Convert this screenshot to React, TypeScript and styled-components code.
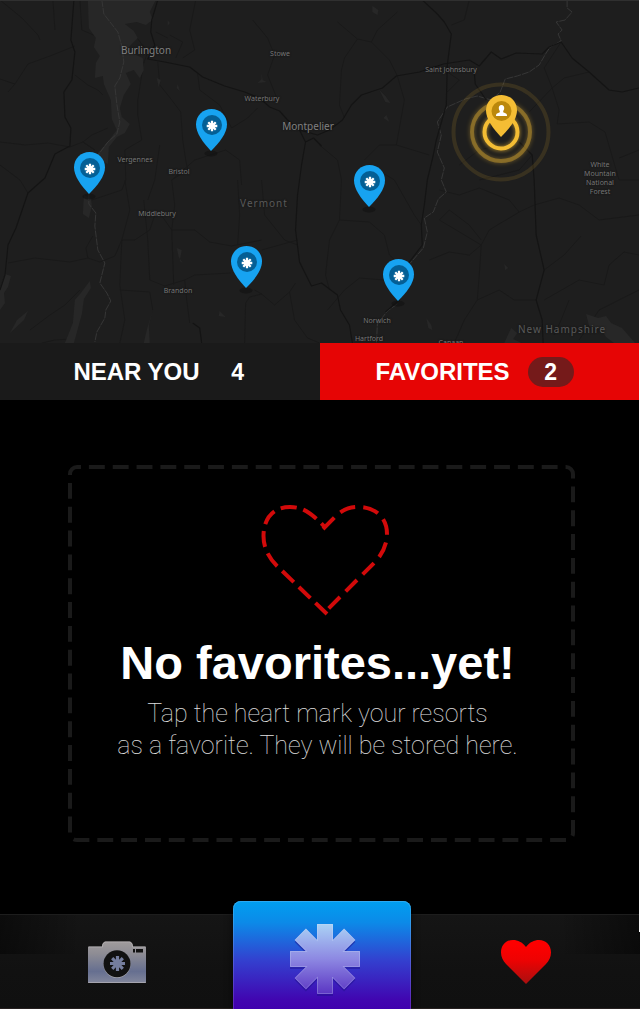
import React from "react";
import styled, { createGlobalStyle, css } from "styled-components";

const GlobalStyle = createGlobalStyle`
  *, *::before, *::after { box-sizing: border-box; }
  body {
    margin: 0;
    background: #000;
    color: #fff;
    font-family: "Liberation Sans", Arial, sans-serif;
  }
  button { font: inherit; color: inherit; border: 0; padding: 0; background: none; cursor: pointer; }
  svg { display: block; }
`;

const MAP_W = 639;

const Screen = styled.div`
  display: flex;
  flex-direction: column;
  min-height: 100vh;
`;

const Content = styled.div`
  flex: 1;
  display: flex;
  flex-direction: column;
  border-right: 1px solid #fff;
`;

/* ---------- map ---------- */

const MapPanel = styled.section`
  position: relative;
  height: 343px;
  overflow: hidden;
  background: #1e1e1e;
  border-top: 1px solid #303030;
`;

const MapArt = styled.svg`
  position: absolute;
  inset: -1px 0 0;
  width: 100%;
  height: 343px;
`;

const Place = styled.span<{ $x: number; $y: number; $kind?: "city" | "state" | "small" }>`
  position: absolute;
  left: ${(p) => (p.$x / MAP_W) * 100}%;
  top: ${(p) => p.$y - 1}px;
  transform: translate(-50%, -50%);
  font-family: "Noto Sans", "Open Sans", sans-serif;
  font-size: 7px;
  line-height: 9px;
  text-align: center;
  white-space: pre;
  color: #777;
  text-shadow: 0 0 2px #111;
  ${(p) => p.$kind === "city" && css`font-size: 10px; color: #808080;`}
  ${(p) => p.$kind === "state" && css`font-size: 10px; letter-spacing: 1px; color: #5a5a5a;`}
`;

const PinButton = styled.button<{ $x: number; $y: number }>`
  position: absolute;
  left: ${(p) => (p.$x / MAP_W) * 100}%;
  top: ${(p) => p.$y - 1}px;
  width: 32px;
  height: 48px;
`;

const Pulse = styled.svg`
  position: absolute;
  left: ${(446 / MAP_W) * 100}%;
  top: 76px;
  width: 110px;
  height: 110px;
  overflow: visible;
`;

/* ---------- tabs ---------- */

const Tabs = styled.div`
  display: grid;
  grid-template-columns: 320fr 319fr;
  height: 57px;
`;

const Tab = styled.button<{ $active?: boolean }>`
  display: flex;
  align-items: center;
  justify-content: center;
  gap: ${(p) => (p.$active ? 18 : 15)}px;
  font-size: 24px;
  font-weight: 700;
  padding: ${(p) => (p.$active ? "0 10px 0 0" : "0 0 0 14px")};
  background: ${(p) => (p.$active ? "#e60505" : "#1a1a1a")};
`;

const Count = styled.span<{ $active?: boolean }>`
  width: 46px;
  height: 30px;
  border-radius: 15px;
  font-size: 23px;
  line-height: 30px;
  text-align: center;
  background: ${(p) => (p.$active ? "#751a1a" : "transparent")};
`;

/* ---------- empty state ---------- */

const Main = styled.main`
  flex: 1;
  display: flex;
  padding: 65px 64px 72px 68px;
`;

const EmptyCard = styled.section`
  position: relative;
  flex: 1;
  display: flex;
  flex-direction: column;
  align-items: center;
  padding: 37px 16px 72px 8px;
`;

const DashedFrame = styled.svg`
  position: absolute;
  inset: 0;
  width: 100%;
  height: 100%;
  pointer-events: none;
`;

const HeartSlot = styled.div`
  padding-left: 14px;
`;

const Title = styled.h1`
  margin: 19px 0 0;
  font-size: 47px;
  line-height: 56px;
  font-weight: 700;
  white-space: nowrap;
`;

const Hint = styled.p`
  margin: 7px 0 0;
  font-family: Roboto, "Open Sans", sans-serif;
  font-size: 25px;
  line-height: 32px;
  font-weight: 100;
  text-align: center;
  color: #e0e0e0;
`;

/* ---------- bottom bar ---------- */

const Bar = styled.nav`
  position: relative;
  display: grid;
  grid-template-columns: 233fr 178px 229fr;
  height: 95px;
  border-top: 1px solid #1d1d1d;
  border-bottom: 1px solid #262020;
  background:
    linear-gradient(90deg, rgba(0, 0, 0, 0.45), transparent 80px, transparent calc(100% - 80px), rgba(0, 0, 0, 0.45)) 0 0 / 100% 39px no-repeat,
    linear-gradient(#151515, #111 60%, #101010);
  &::after {
    content: "";
    position: absolute;
    top: -1px;
    right: 0;
    width: 1px;
    height: 18px;
    background: #fff;
  }
`;

const BarButton = styled.button`
  display: flex;
  align-items: center;
  justify-content: center;
`;

const HomeButton = styled(BarButton)`
  height: 108px;
  margin-top: -14px;
  padding-top: 10px;
  padding-left: 6px;
  border-radius: 8px 8px 0 0;
  background: linear-gradient(#009ff0, #0c8ae8 20%, #3340cf 55%, #4105b0 92%, #4000ae);
  box-shadow: inset 0 1px 0 #2ba9f2, inset 1px 0 0 rgba(255, 255, 255, 0.15), inset -1px 0 0 rgba(255, 255, 255, 0.15), 0 0 8px rgba(0, 0, 0, 0.6);
`;

/* Outline of an eight-armed asterisk centred on (cx, cy). */
function asterisk(cx: number, cy: number, radius: number, half: number) {
  const inner = half / Math.tan(Math.PI / 8);
  const corners = [[-half, -radius], [half, -radius], [half, -inner]];
  const points: string[] = [];
  for (let k = 0; k < 8; k++) {
    const a = (k * Math.PI) / 4;
    corners.forEach(([x, y]) => {
      const px = cx + x * Math.cos(a) - y * Math.sin(a);
      const py = cy + x * Math.sin(a) + y * Math.cos(a);
      points.push(`${px.toFixed(2)},${py.toFixed(2)}`);
    });
  }
  return points.join(" ");
}

const PIN_PATH = "M15.5 0C24.3 0 31 6.8 31 15.3C31 24.5 23.5 33.5 15 42C7 33.5 0 24.5 0 15.3C0 6.8 6.7 0 15.5 0Z";

function ResortPin({ x, y, name }: { x: number; y: number; name: string }) {
  return (
    <PinButton $x={x} $y={y} aria-label={name}>
      <svg width="32" height="48" viewBox="0 0 32 48">
        <ellipse cx="15" cy="44.5" rx="6.5" ry="3" fill="#101010" opacity=".6" />
        <path d={PIN_PATH} fill="#17a3f1" />
        <circle cx="16" cy="16" r="10" fill="#045f95" />
        <polygon points={asterisk(16, 17, 5.3, 1.15)} fill="#fff" />
      </svg>
    </PinButton>
  );
}

const RESORTS = [
  { name: "Resort near Vergennes", x: 74, y: 152 },
  { name: "Resort near Waterbury", x: 196, y: 109 },
  { name: "Resort near Montpelier", x: 354, y: 165 },
  { name: "Resort near Brandon", x: 231, y: 246 },
  { name: "Resort near Norwich", x: 383, y: 259 },
];

const PLACES: { text: string; x: number; y: number; kind?: "city" | "state" | "small" }[] = [
  { text: "Burlington", x: 146, y: 50, kind: "city" },
  { text: "Stowe", x: 280, y: 53 },
  { text: "Waterbury", x: 262, y: 98 },
  { text: "Montpelier", x: 308, y: 126, kind: "city" },
  { text: "Saint Johnsbury", x: 451, y: 69 },
  { text: "Vergennes", x: 135, y: 159 },
  { text: "Bristol", x: 179, y: 171 },
  { text: "Middlebury", x: 157, y: 213 },
  { text: "Vermont", x: 264, y: 203, kind: "state" },
  { text: "Brandon", x: 178, y: 290 },
  { text: "Norwich", x: 377, y: 320 },
  { text: "Hartford", x: 369, y: 338 },
  { text: "Canaan", x: 451, y: 342 },
  { text: "New Hampshire", x: 562, y: 329, kind: "state" },
  { text: "White\nMountain\nNational\nForest", x: 600, y: 178 },
];

const WATER = [
  "M88 0H156L150 12L153 20L146 25L137 22L125 24L134 31L138 38L130 46L127 51L143 58L144 70L140 78L134 70L126 73L131 84L124 95L120 108L122 117L130 124L125 133L117 137L109 147L108 164L101 160L98 153L107 143L117 130L112 119L111 100L104 84L103 76L95 78L96 63L100 56L94 47L96 38L89 28Z",
  "M84 195L91 198L92 206L89 218L83 214Z",
  "M81 293L90 281L91 288L84 299L82 314L74 343H65L73 323L75 300Z",
  "M5 274L11 276L8 287L4 293L5 303L0 310V288Z",
  "M10 333L17 320L28 311L24 320Z",
  "M177 248L182 250L180 261L183 263L179 257Z",
  "M153 310L149 325L150 343H144L147 330Z",
  "M512 328L518 333L514 339L522 343H505Z",
  "M587 314L599 318L607 316L612 323L623 328L636 343H615L607 337L602 329L590 326Z",
  "M427 318L432 325L433 330L429 328Z",
  "M505 264L509 268L506 270Z",
  "M373 6L379 10L378 15L373 12Z",
  "M380 90L386 96L391 103L386 102Z",
  "M157 78L161 80L159 87ZM178 84L180 91L177 88ZM220 311L223 314L226 317L219 316ZM168 20L170 23L168 26ZM390 122L387 115L384 118ZM262 73L263 80L267 82L258 83L262 79Z",
];

const RIVERS = [
  "M102 0L104 14L118 32L122 46L124 62L120 78L115 86L117 104L120 122L117 134L108 142L99 154",
  "M89 193L89 204L96 213L95 226L98 250L105 263L102 275L100 283L107 293L111 301L106 310L105 318L97 332L95 342",
  "M568 0L568 8L573 12L566 20L557 22L563 30L559 34L562 41L551 47L547 53L540 65L530 72L518 76L506 79L501 92L492 100L478 96L466 99L448 107L438 122L442 135L438 152L445 168L442 180L447 192L439 199L434 212L425 218L428 232L424 248L411 263",
  "M398 304L388 311L378 324L377 343",
];

const ROADS = [
  "M74 0L71 40L75 52L72 80L64 92L65 117L71 128L70 146L55 154L45 178L28 193L16 228L8 245L5 275L0 290",
  "M158 0L152 20L151 32L155 45L148 59L165 62L190 67L203 77L225 86L245 92L260 98L270 107L280 111L288 120L300 130L306 142L302 165L298 195L296 230L300 262L312 286L322 283L338 295L341 310L350 325L353 343",
  "M300 130L318 135L330 130L343 120L352 105L362 95L383 88L397 76L420 72L444 64",
  "M423 0L438 14L445 22L452 34L448 65L447 105L437 140L434 155L428 180L425 205L422 225L423 245L410 262L400 300L386 312",
  "M444 64L470 60L480 66L492 52L502 59L517 53L543 54L550 47L562 42L573 58L590 72L610 90L623 92L640 88",
  "M475 72L476 84L487 100",
  "M520 142L533 155L535 180L537 235L545 270L537 300L543 320L544 343",
  "M306 142L314 138L322 146",
  "M193 323L200 328L202 343",
];

const LANES = [
  "M0 79L15 84L28 64L50 56L75 46M15 84L8 92M80 0L82 30L96 36M75 75L88 85L98 90L103 95",
  "M0 142L25 145L48 143L70 147L83 142L95 150L83 142L92 135L108 128M0 165L20 180L28 193",
  "M135 35L148 52L142 68L144 62L138 100L138 115L142 140L125 150L126 180L122 190L92 200",
  "M158 62L160 85L172 100L181 112L183 140L186 160L188 170L172 180L175 205L172 230L174 285",
  "M196 0L190 30L195 50L183 58M198 74L200 90L220 105L232 128L248 118L258 108",
  "M170 35L183 42L176 58M156 32L168 38M253 20L268 38L275 55L268 75L278 100",
  "M0 0L22 18L38 35L40 40",
  "M338 22L358 39L345 58L342 70L340 105L345 118M358 39L372 42L378 30L398 12M372 42L390 60L398 76",
  "M452 25L465 20L470 0M448 72L460 80L448 92",
  "M562 42L545 68L553 88L560 110L558 124L590 122L606 132L620 180L640 180",
  "M553 88L565 78L590 72M553 88L530 112M640 150L620 158",
  "M460 165L480 150L500 145L520 142L533 155L520 170L480 180",
  "M8 263L35 258L70 262L88 258L100 262L115 256L122 240L135 240L150 230L155 215",
  "M88 258L86 248L93 236M125 180L130 210L122 240",
  "M144 200L148 240L150 280L165 286L185 280L195 275L231 273",
  "M160 213L172 230L195 230L210 242L232 246L262 240M262 250L298 240",
  "M122 240L120 285L125 320L120 343M120 290L150 292L153 310",
  "M30 330L50 315L65 305L80 290M42 343L55 340L70 339",
  "M185 280L187 300L190 323M245 343L246 303L250 297L262 294L275 305L290 292L296 283",
  "M262 294L255 290M290 292L295 320L308 338L320 343",
  "M238 180L240 215L238 245M262 180L265 215L285 240L298 245",
  "M320 145L338 160L342 180L340 220L330 240L326 275L330 290",
  "M340 220L370 222L385 235L390 255L398 262M370 165L395 180L415 215L422 225",
  "M328 310L345 290L360 278L385 280M440 190L460 195L480 188L510 200L520 212L490 230L482 245L440 220",
  "M482 245L480 275L478 300L465 320L455 343M478 300L500 290L515 300L537 300",
  "M430 260L450 252L470 255L482 245M520 212L535 205L560 198L580 205L600 220L640 215",
  "M545 270L565 255L582 236M545 300L580 280L605 285L610 265L625 252L640 255",
  "M440 220L450 210L470 225L482 240M580 340L600 310L640 290M570 300L562 320L555 335",
  "M398 76L405 100L397 145L380 145L365 160M397 145L430 155",
  "M53 0L55 30M160 145L155 180L148 200M172 180L195 160L226 150L240 160L242 185",
];

function PlaceMap() {
  return (
    <MapPanel aria-label="Resort map">
      <MapArt viewBox="0 0 640 343" preserveAspectRatio="none" aria-hidden="true" fill="none" strokeLinejoin="round">
        {LANES.map((d) => <path key={d} d={d} stroke="#191919" strokeWidth="1" />)}
        {WATER.map((d) => <path key={d} d={d} fill="#272727" />)}
        {RIVERS.map((d) => <path key={d} d={d} stroke="#363636" strokeWidth="1" strokeDasharray="7 1" />)}
        {ROADS.map((d) => <path key={d} d={d} stroke="#141414" strokeWidth="1.2" />)}
      </MapArt>
      {PLACES.map((p) => (
        <Place key={p.text} $x={p.x} $y={p.y} $kind={p.kind}>{p.text}</Place>
      ))}
      {RESORTS.map((r) => <ResortPin key={r.name} {...r} />)}
      <Pulse viewBox="0 0 110 110" fill="none" stroke="#f4bd34" aria-hidden="true">
        <defs>
          <filter id="glow" x="-30%" y="-30%" width="160%" height="160%">
            <feGaussianBlur stdDeviation="2" />
          </filter>
        </defs>
        <circle cx="55" cy="55" r="47.5" strokeWidth="4" opacity=".12" />
        <circle cx="55" cy="55" r="29" strokeWidth="5" opacity=".3" filter="url(#glow)" />
        <circle cx="55" cy="55" r="29" strokeWidth="4" opacity=".36" />
        <circle cx="55" cy="55" r="16.5" strokeWidth="5" opacity=".6" filter="url(#glow)" />
        <circle cx="55" cy="55" r="16.5" strokeWidth="4" />
      </Pulse>
      <PinButton $x={486} $y={95} aria-label="Your location">
        <svg width="32" height="48" viewBox="0 0 32 48">
          <path d={PIN_PATH} fill="#f4bd34" />
          <circle cx="15.5" cy="16" r="10" fill="#bb880c" />
          <path d="M15.5 10C17.4 10 18.3 11.3 18.2 13.2C18.1 14.7 17.6 15.4 17.2 16V17.3L20 18.6C20.8 19 21 19.8 21 21H10C10 19.8 10.2 19 11 18.6L13.8 17.3V16C13.4 15.4 12.9 14.7 12.8 13.2C12.7 11.3 13.6 10 15.5 10Z" fill="#fff" />
        </svg>
      </PinButton>
    </MapPanel>
  );
}

function DashedHeart() {
  return (
    <svg width="132" height="114" viewBox="259 502 132 114" fill="none" stroke="#d20a0a" strokeWidth="4" aria-hidden="true">
      <path strokeDasharray="16 8" d="M323 529L335 517C342 510 349 507 358 507C376 507 387 518 387 534C387 545 382 555 374 563L325 612" />
      <path strokeDasharray="16 7" d="M327 614L277 566C268 557 263.500 547 263.500 536C263.500 519 273 507 290 507C304 507 312 514 325 527" />
    </svg>
  );
}

function CameraIcon() {
  return (
    <svg width="58" height="43" viewBox="0 0 58 43" aria-hidden="true">
      <defs>
        <linearGradient id="steel" x1="0" y1="0" x2="0" y2="1">
          <stop offset="0" stopColor="#a09c9c" />
          <stop offset=".3" stopColor="#8d8c94" />
          <stop offset=".72" stopColor="#666f90" />
          <stop offset="1" stopColor="#83879c" />
        </linearGradient>
      </defs>
      <path d="M1 5.500H14C14 2 16 .5 18 .5H41C43 .5 45 2 45 5.500H57Q58 5.500 58 6.500V41Q58 42 57 42H1Q0 42 0 41V6.500Q0 5.500 1 5.500Z" fill="url(#steel)" />
      <path d="M.5 6H14.500C14.500 2.500 16 1 18 1H41C43 1 44.500 2.500 44.500 6H57.500M0 41.500H58" stroke="#bcb9ba" strokeOpacity=".6" fill="none" />
      <circle cx="29" cy="23.500" r="13.500" fill="#a9a9b0" />
      <circle cx="29" cy="22.800" r="13.500" fill="#111" />
      <polygon points={asterisk(29.5, 22.5, 7.5, 1.6)} fill="#747d9d" />
      <path d="M45 8H47V11.500H45ZM48 8H55V11.500H48Z" fill="#111" />
    </svg>
  );
}

function HomeIcon() {
  return (
    <svg width="74" height="76" viewBox="0 0 74 76" aria-hidden="true">
      <defs>
        <linearGradient id="ice" x1="0" y1="0" x2="0" y2="1">
          <stop offset="0" stopColor="#aad2f5" />
          <stop offset=".5" stopColor="#8d88e2" />
          <stop offset="1" stopColor="#5b35c3" />
        </linearGradient>
      </defs>
      <polygon points={asterisk(37, 39, 35, 8)} fill="#20108a" opacity=".45" />
      <polygon points={asterisk(37, 37, 35, 8)} fill="url(#ice)" />
      <polygon points={asterisk(37, 37, 34.5, 7.5)} fill="none" stroke="#d5e2fb" strokeOpacity=".25" />
    </svg>
  );
}

function HeartIcon() {
  return (
    <svg width="52" height="46" viewBox="0 0 52 46" aria-hidden="true">
      <defs>
        <linearGradient id="ruby" x1="0" y1="0" x2="0" y2="1">
          <stop offset=".1" stopColor="#fd0000" />
          <stop offset=".45" stopColor="#ee0202" />
          <stop offset="1" stopColor="#a81010" />
        </linearGradient>
      </defs>
      <path d="M26 8C22 3 18 1 13 1C6 1 1 6 1 13.500C1 18 3 22 6 25L26 45L46 25C49 22 51 18 51 13.500C51 6 46 1 39 1C34 1 30 3 26 8Z" fill="url(#ruby)" />
    </svg>
  );
}

export default function App() {
  return (
    <Screen>
      <GlobalStyle />
      <Content>
        <PlaceMap />
        <Tabs role="tablist">
          <Tab role="tab" aria-selected={false}>
            NEAR YOU <Count>4</Count>
          </Tab>
          <Tab role="tab" aria-selected $active>
            FAVORITES <Count $active>2</Count>
          </Tab>
        </Tabs>
        <Main>
          <EmptyCard>
            <DashedFrame aria-hidden="true">
              <rect
                x="2"
                y="2"
                rx="7"
                fill="none"
                stroke="#1a1a1a"
                strokeWidth="4"
                pathLength="1752"
                strokeDasharray="16 8"
                strokeDashoffset="-12"
                style={{ width: "calc(100% - 4px)", height: "calc(100% - 4px)" }}
              />
            </DashedFrame>
            <HeartSlot><DashedHeart /></HeartSlot>
            <Title>No favorites...yet!</Title>
            <Hint>
              Tap the heart mark your resorts
              <br />
              as a favorite. They will be stored here.
            </Hint>
          </EmptyCard>
        </Main>
      </Content>
      <Bar aria-label="Main">
        <BarButton aria-label="Camera"><CameraIcon /></BarButton>
        <HomeButton aria-label="Resorts"><HomeIcon /></HomeButton>
        <BarButton aria-label="Favorites"><HeartIcon /></BarButton>
      </Bar>
    </Screen>
  );
}
